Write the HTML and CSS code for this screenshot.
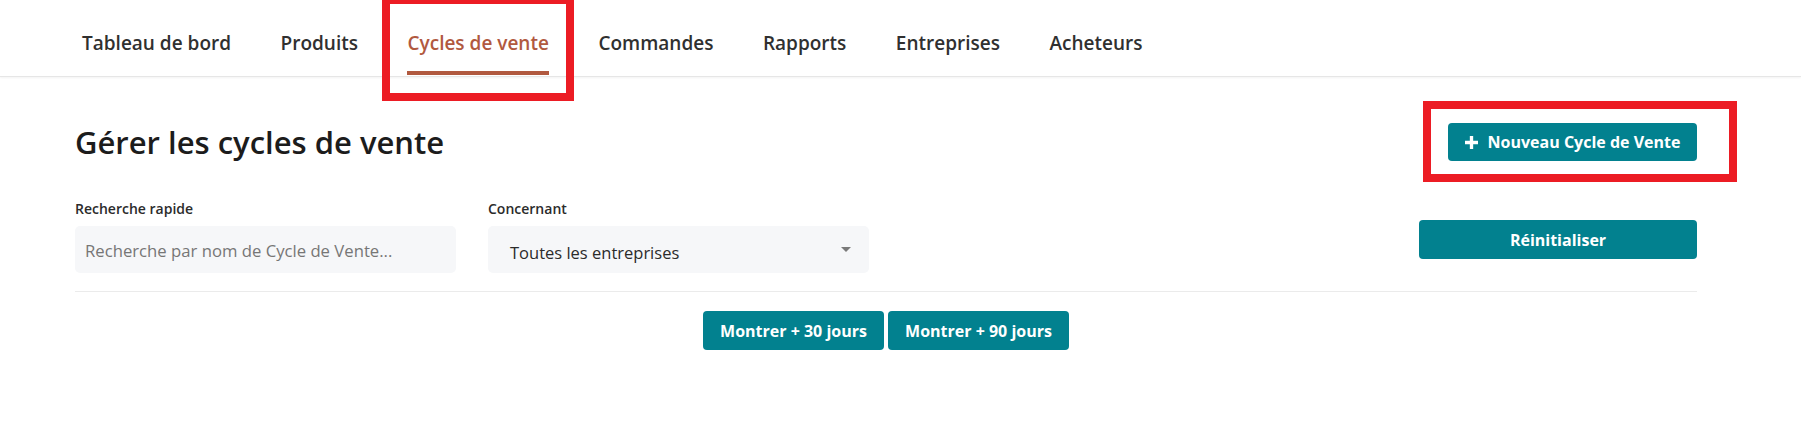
FILE: index.html
```html
<!DOCTYPE html>
<html lang="fr">
<head>
<meta charset="utf-8">
<title>Gérer les cycles de vente</title>
<link rel="stylesheet" href="styles.css">
</head>
<body>
<header class="topbar">
  <nav class="nav">
    <a class="nav-item" href="#">Tableau de bord</a>
    <a class="nav-item" href="#">Produits</a>
    <a class="nav-item active" href="#">Cycles de vente</a>
    <a class="nav-item" href="#">Commandes</a>
    <a class="nav-item" href="#">Rapports</a>
    <a class="nav-item" href="#">Entreprises</a>
    <a class="nav-item" href="#">Acheteurs</a>
  </nav>
</header>
<div class="mark mark-nav"></div>
<div class="mark mark-btn"></div>
<main class="page">
  <div class="title-row">
    <h1 class="title">Gérer les cycles de vente</h1>
    <button class="btn btn-new"><svg class="plus" viewBox="0 0 14 14" width="13" height="13"><path d="M5.2 0h3.6v5.2H14v3.6H8.8V14H5.2V8.8H0V5.2h5.2z" fill="#fff"/></svg>Nouveau Cycle de Vente</button>
  </div>
  <div class="filters">
    <div class="field">
      <label class="label">Recherche rapide</label>
      <div class="input placeholder">Recherche par nom de Cycle de Vente...</div>
    </div>
    <div class="field">
      <label class="label">Concernant</label>
      <div class="input select">Toutes les entreprises<span class="caret"></span></div>
    </div>
    <div class="spacer"></div>
    <button class="btn btn-reset">Réinitialiser</button>
  </div>
  <hr class="divider">
  <div class="more-row">
    <button class="btn btn-more">Montrer + 30 jours</button>
    <button class="btn btn-more">Montrer + 90 jours</button>
  </div>
</main>
</body>
</html>
```

FILE: styles.css
```css
* { box-sizing: border-box; }
body {
  margin: 0;
  font-family: "Open Sans", "Noto Sans", sans-serif;
  color: #2b2b2b;
  background: #fff;
}
.topbar {
  height: 77px;
  border-bottom: 1px solid #e6e6e6;
  box-shadow: 0 1px 2px rgba(0,0,0,0.05);
}
.nav {
  display: flex;
  gap: 49.5px;
  padding-left: 82px;
  height: 75px;
}
.nav-item {
  display: flex;
  align-items: center;
  height: 75px;
  padding-top: 14px;
  font-size: 19px;
  font-weight: 600;
  color: #303030;
  text-decoration: none;
  border-bottom: 4px solid transparent;
}
.nav-item.active {
  color: #b1593f;
  border-bottom-color: #b1593f;
}
.mark {
  position: absolute;
  border: 8px solid #ec1c24;
}
.mark-nav { left: 382px; top: -4px; width: 192px; height: 105px; }
.mark-btn { left: 1423px; top: 101px; width: 314px; height: 81px; }
.page {
  padding: 46px 104px 0 75px;
}
.title-row {
  display: flex;
  align-items: center;
  justify-content: space-between;
  height: 38px;
}
.title {
  margin: 0;
  font-size: 31px;
  font-weight: 600;
  color: #1c1c1c;
  line-height: 38px;
}
.btn {
  font-family: inherit;
  border: 0;
  border-radius: 4px;
  background: #02818f;
  color: #fff;
  font-size: 16px;
  font-weight: 700;
  cursor: pointer;
}
.btn-new {
  height: 38px;
  width: 249px;
  display: flex;
  align-items: center;
  justify-content: center;
  gap: 10px;
  padding: 0;
}
.filters {
  display: flex;
  gap: 32px;
  margin-top: 38px;
}
.field {
  width: 381px;
  display: flex;
  flex-direction: column;
  gap: 8px;
}
.label {
  font-size: 14px;
  font-weight: 600;
  line-height: 19px;
  color: #2b2b2b;
}
.input {
  height: 47px;
  background: #f6f7f9;
  border-radius: 5px;
  display: flex;
  align-items: center;
  padding: 2px 10px 0;
  font-size: 16.7px;
}
.placeholder { color: #767676; }
.select {
  position: relative;
  padding-left: 22px;
  padding-top: 6px;
  color: #2b2b2b;
  font-size: 16.5px;
}
.caret {
  position: absolute;
  right: 18px;
  top: 21px;
  width: 0;
  height: 0;
  border-left: 5px solid transparent;
  border-right: 5px solid transparent;
  border-top: 5px solid #7a7a7a;
}
.spacer { flex: 1; }
.btn-reset {
  width: 278px;
  height: 39px;
  margin-top: 21px;
}
.divider {
  border: 0;
  border-top: 1px solid #ebebeb;
  margin: 18px 0 0;
}
.more-row {
  display: flex;
  justify-content: center;
  gap: 4px;
  margin-top: 19px;
}
.btn-more {
  width: 181px;
  height: 39px;
}
```
